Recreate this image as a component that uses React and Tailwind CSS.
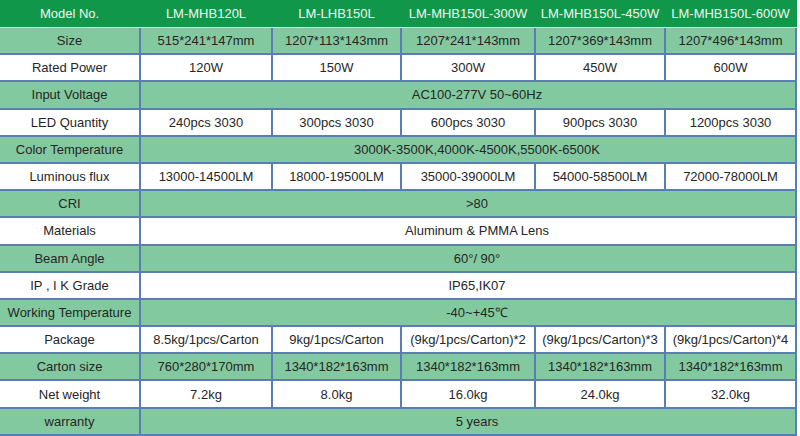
import React from "react";

const cols = "grid grid-cols-[139px_130px_127px_132px_128px_129px] gap-x-[2px]";

const header = ["Model No.", "LM-MHB120L", "LM-LHB150L", "LM-MHB150L-300W", "LM-MHB150L-450W", "LM-MHB150L-600W"];

const rows = [
  ["Size", ["515*241*147mm", "1207*113*143mm", "1207*241*143mm", "1207*369*143mm", "1207*496*143mm"]],
  ["Rated Power", ["120W", "150W", "300W", "450W", "600W"]],
  ["Input Voltage", "AC100-277V 50~60Hz"],
  ["LED Quantity", ["240pcs 3030", "300pcs 3030", "600pcs 3030", "900pcs 3030", "1200pcs 3030"]],
  ["Color Temperature", "3000K-3500K,4000K-4500K,5500K-6500K"],
  ["Luminous flux", ["13000-14500LM", "18000-19500LM", "35000-39000LM", "54000-58500LM", "72000-78000LM"]],
  ["CRI", ">80"],
  ["Materials", "Aluminum & PMMA Lens"],
  ["Beam Angle", "60°/ 90°"],
  ["IP , I K Grade", "IP65,IK07"],
  ["Working Temperature", "-40~+45℃"],
  ["Package", ["8.5kg/1pcs/Carton", "9kg/1pcs/Carton", "(9kg/1pcs/Carton)*2", "(9kg/1pcs/Carton)*3", "(9kg/1pcs/Carton)*4"]],
  ["Carton size", ["760*280*170mm", "1340*182*163mm", "1340*182*163mm", "1340*182*163mm", "1340*182*163mm"]],
  ["Net weight", ["7.2kg", "8.0kg", "16.0kg", "24.0kg", "32.0kg"]],
  ["warranty", "5 years"],
];

export default function App() {
  return (
    <div className="w-[800px] h-[436px] bg-white overflow-hidden font-['Liberation_Sans',Arial,sans-serif] text-[13px] leading-none text-[#262626]">
      <div className={`${cols} w-[797px] h-[27px] bg-[#10974a] text-[#eef8ef] items-center text-center`}>
        {header.map((h, i) => (
          <div key={i} className="whitespace-nowrap">{h}</div>
        ))}
      </div>
      <div className="w-[797px] h-[1px] bg-[#d6e6dc]"></div>
      <div className={`${cols} gap-y-[2px] auto-rows-[25.2px] w-[797px] bg-[#5a7db6] pr-[2px] pb-[2px]`}>
        {rows.map(([label, vals], r) => {
          const bg = r % 2 === 0 ? "bg-[#83c9a0]" : "bg-white";
          return (
            <React.Fragment key={r}>
              <div className={`${bg} flex items-center justify-center whitespace-nowrap`}>{label}</div>
              {Array.isArray(vals) ? (
                vals.map((v, i) => (
                  <div key={i} className={`${bg} flex items-center justify-center whitespace-nowrap`}>{v}</div>
                ))
              ) : (
                <div className={`${bg} col-span-5 flex items-center justify-center pl-[18px] whitespace-nowrap`}>{vals}</div>
              )}
            </React.Fragment>
          );
        })}
      </div>
    </div>
  );
}
